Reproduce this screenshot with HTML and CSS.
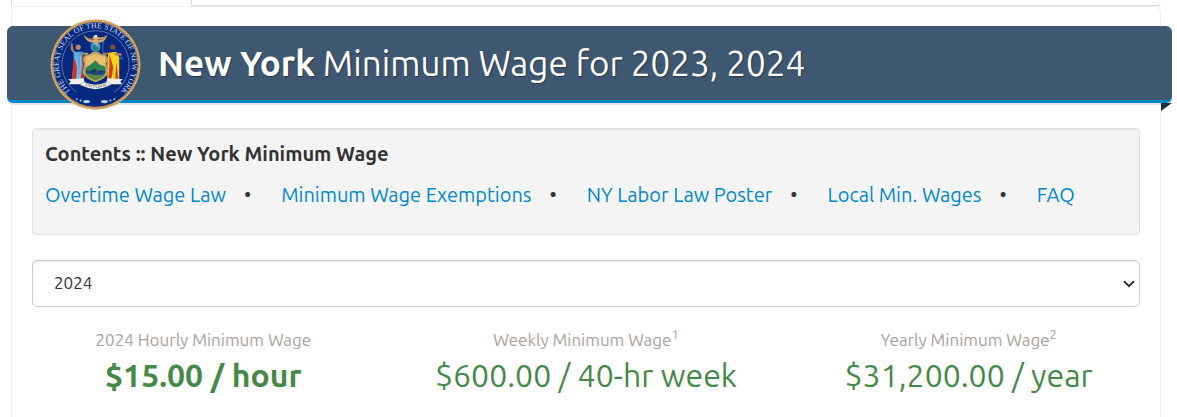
FILE: index.html
```
<!DOCTYPE html>
<html lang="en">
<head>
    <meta charset="UTF-8">
    <meta name="viewport" content="width=device-width, initial-scale=1.0">
    <title>New York Minimum Wage for 2023, 2024</title>
    <link rel="stylesheet" href="styles.css">
</head>
<body>
    <div class="tabs">
        <div class="tab-active"></div>
        <div class="tabs-line"></div>
    </div>
    <main class="card">
        <header class="ribbon">
            <svg class="seal" viewBox="0 0 92 92" role="img" aria-label="Seal of New York">
                <defs>
                    <path id="sealArc" d="M23.5 75.5 A37 37 0 1 1 68.5 75.5"/>
                </defs>
                <circle cx="46" cy="46" r="45.5" fill="#b98d50"/>
                <circle cx="46" cy="46" r="44.5" fill="none" stroke="#e0b77b" stroke-width="1.4" stroke-dasharray="2 1"/>
                <circle cx="46" cy="46" r="42.6" fill="#06297f"/>
                <path d="M27 74 A34 34 0 1 1 65 74" fill="none" stroke="#8ea8d8" stroke-width="0.6"/>
                <text class="seal-text"><textPath href="#sealArc" startOffset="50%" text-anchor="middle">THE GREAT SEAL OF THE STATE OF NEW YORK</textPath></text>
                <!-- eagle on the globe -->
                <circle cx="46" cy="28" r="5" fill="#4b9fd0"/>
                <path d="M42 27 l3 -1 2 2 3 1 -2 3 -4 0z" fill="#287e83"/>
                <path d="M34 16 Q38 20 43 20 L44 17 46 16 48 18 Q53 20 58 16 Q56 24 49 24 L47 27 45 24 Q36 24 34 16z" fill="#d3ab78"/>
                <path d="M36 18 Q41 22 45 21 M56 18 Q52 22 48 21" fill="none" stroke="#765034" stroke-width="0.8"/>
                <path d="M45 17 l2 -1 1 2 -2 1z" fill="#f5ead8"/>
                <!-- Liberty -->
                <path d="M21 26 l1 -2 1 2 1 6 3 2 -2 2 -4 -5z" fill="#b18053"/>
                <circle cx="28.5" cy="28.5" r="2.6" fill="#b48358"/>
                <path d="M24 33 L33 33 35 42 34 61 22 62 24 44z" fill="#58a8d8"/>
                <path d="M32 34 L35 40 35 60 31 61 33 46z M24 39 l-2 22 4 1 2 -13z" fill="#d3302b"/>
                <path d="M27 38 l1 22 M31 38 l-1 22" stroke="#91cef0" stroke-width="0.8"/>
                <path d="M33 34 l6 0 -1 2 -5 0z" fill="#c69774"/>
                <!-- Justice -->
                <circle cx="63.5" cy="28.5" r="2.6" fill="#805033"/>
                <path d="M59 34 L67 33 70 39 70 61 58 61 58 41z" fill="#f5d51c"/>
                <path d="M60 35 l4 14 -2 12 -3 0 1 -14z M67 44 l2 16 -3 1z" fill="#d33b25"/>
                <path d="M65 34 l7 1 0 2 -6 0z M59 34 l-6 0 1 2 5 0z" fill="#b88255"/>
                <path d="M72 35 v5 M70 40 h4 M53.5 22 v12" stroke="#8190a8" stroke-width="0.6"/>
                <!-- shield -->
                <path d="M36 36 Q41 36 43 33 L49 33 Q51 36 56 36 L59 40 57 45 59 54 Q57 60 46 64 Q35 60 33 54 L35 45 33 40z" fill="#b7a366"/>
                <path d="M36 38 Q43 37 46 35 Q49 37 56 38 L56 55 Q53 59 46 62 Q39 59 36 55z" fill="#e6be6c"/>
                <path d="M36 49 L41 46 46 42 50 46 56 48 V53 H36z" fill="#2f8052"/>
                <path d="M36 52 H56 V55 L52 57 H40 L36 55z" fill="#25477c"/>
                <path d="M36 55 Q44 56 48 57 L56 56 Q53 59 46 62 Q39 60 36 55z" fill="#558a40"/>
                <path d="M42 52 l4 -2 v4 h-4z M49 54 l3 -2 v2z" fill="#12315c"/>
                <!-- motto scroll -->
                <path d="M18 61 L34 60 35 64 Q46 69 57 64 L58 60 74 61 71 63 73 66 62 66 58 68 Q46 74 34 68 L30 66 19 66 21 63z" fill="#f2f1ed"/>
                <path d="M34 64 l-4 2 4 2 M58 64 l4 2 -4 2" fill="none" stroke="#aaa" stroke-width="0.7"/>
                <path id="motto" d="M36 67.5 Q46 71.5 57 67.5" fill="none"/>
                <text class="seal-motto"><textPath href="#motto" startOffset="50%" text-anchor="middle">EXCELSIOR</textPath></text>
                <g fill="#b7d5ef">
                    <ellipse cx="37" cy="83.5" rx="3.5" ry="1.6"/>
                    <ellipse cx="55" cy="83.5" rx="3.5" ry="1.6"/>
                    <circle cx="27" cy="81" r="1"/>
                    <circle cx="31" cy="82.3" r="1"/>
                    <circle cx="61" cy="82.3" r="1"/>
                    <circle cx="65" cy="81" r="1"/>
                </g>
            </svg>
            <h1><strong>New York</strong> Minimum Wage for 2023, 2024</h1>
        </header>

        <nav class="contents">
            <h2>Contents :: New York Minimum Wage</h2>
            <ul>
                <li><a href="#overtime">Overtime Wage Law</a></li>
                <li><a href="#exemptions">Minimum Wage Exemptions</a></li>
                <li><a href="#poster">NY Labor Law Poster</a></li>
                <li><a href="#local">Local Min. Wages</a></li>
                <li><a href="#faq">FAQ</a></li>
            </ul>
        </nav>

        <select class="year-select" aria-label="Year">
            <option value="2024" selected>2024</option>
            <option value="2023">2023</option>
        </select>

        <div class="wages">
            <div class="wage">
                <div class="wage-label">2024 Hourly Minimum Wage</div>
                <div class="wage-value"><strong>$15.00 / hour</strong></div>
            </div>
            <div class="wage">
                <div class="wage-label">Weekly Minimum Wage<sup>1</sup></div>
                <div class="wage-value">$600.00 / 40-hr week</div>
            </div>
            <div class="wage">
                <div class="wage-label">Yearly Minimum Wage<sup>2</sup></div>
                <div class="wage-value">$31,200.00 / year</div>
            </div>
        </div>
    </main>
</body>
</html>
```
FILE: styles.css
```
* {
    box-sizing: border-box;
}
body {
    margin: 0;
    padding: 0 16px 0 11px;
    background: #fff;
    color: #333;
    font-family: Ubuntu, "Noto Sans", sans-serif;
}
.tabs {
    display: flex;
    height: 6px;
}
.tab-active {
    width: 181px;
    border: 1px solid #ddd;
    border-width: 0 1px;
}
.tabs-line {
    flex: 1;
    border-bottom: 1px solid #ddd;
}
.card {
    min-height: 420px;
    padding: 20px;
    border: 1px solid #eee;
    border-bottom: 0;
    border-radius: 6px 6px 0 0;
}
.ribbon {
    position: relative;
    display: flex;
    align-items: center;
    height: 77px;
    margin: -1px -32px 25px -25px;
    padding-left: 43px;
    background: #3f5871;
    border-bottom: 3px solid #0088cc;
    border-radius: 6px;
    box-shadow: 0 2px 1px #e4e4e4;
}
/* folded corner under the right edge */
.ribbon::after {
    content: "";
    position: absolute;
    top: 77px;
    right: 0;
    border-top: 8px solid #22303f;
    border-right: 11px solid transparent;
}
.seal {
    flex: none;
    width: 91px;
    height: 91px;
    margin: -7px 0 -9px;
}
.seal-text {
    fill: #cfdcf2;
    font-family: "Liberation Serif", serif;
    font-size: 8px;
}
.seal-motto {
    fill: #333;
    font-family: "Liberation Serif", serif;
    font-size: 4px;
}
h1 {
    margin: 0 0 0 17px;
    color: #fff;
    font-size: 35px;
    line-height: 40px;
    font-weight: 400;
    text-shadow: 1px 1px 1px #26394b;
}
.contents {
    min-height: 107px;
    margin-bottom: 25px;
    padding: 10px 12px;
    background: #f4f4f4;
    border: 1px solid #e1e1e1;
    border-radius: 4px;
    box-shadow: inset 0 1px 1px rgba(0, 0, 0, 0.05);
}
.contents h2 {
    margin: 0 0 11px;
    font-size: 20px;
    line-height: 30px;
    font-weight: 700;
}
.contents ul {
    display: flex;
    flex-wrap: wrap;
    margin: 0;
    padding: 0;
    list-style: none;
    font-size: 20px;
    line-height: 30px;
}
.contents li:not(:last-child)::after {
    content: "•";
    margin: 0 30px 0 18px;
}
.contents a {
    color: #0088cc;
    text-decoration: none;
}
.year-select {
    display: block;
    width: 100%;
    height: 47px;
    margin-bottom: 20px;
    padding: 0 28px 2px 21px;
    color: #333;
    background: #fff url("data:image/svg+xml,%3Csvg xmlns='http://www.w3.org/2000/svg' width='12' height='8'%3E%3Cpath d='M1 1.2l5 5 5-5' fill='none' stroke='%23333' stroke-width='2'/%3E%3C/svg%3E") no-repeat right 4px center;
    border: 1px solid #ccc;
    border-radius: 5px;
    box-shadow: inset 0 1px 1px rgba(0, 0, 0, 0.08);
    font-family: inherit;
    font-size: 17px;
    appearance: none;
}
.wages {
    display: grid;
    grid-template-columns: repeat(3, 1fr);
    margin: 0 -20px;
    text-align: center;
}
.wage-label {
    color: #aaa19b;
    font-size: 17px;
    line-height: 26px;
}
.wage-label sup {
    font-size: 13px;
    line-height: 0;
}
.wage-value {
    color: #468847;
    font-size: 32px;
    line-height: 44px;
}
```
